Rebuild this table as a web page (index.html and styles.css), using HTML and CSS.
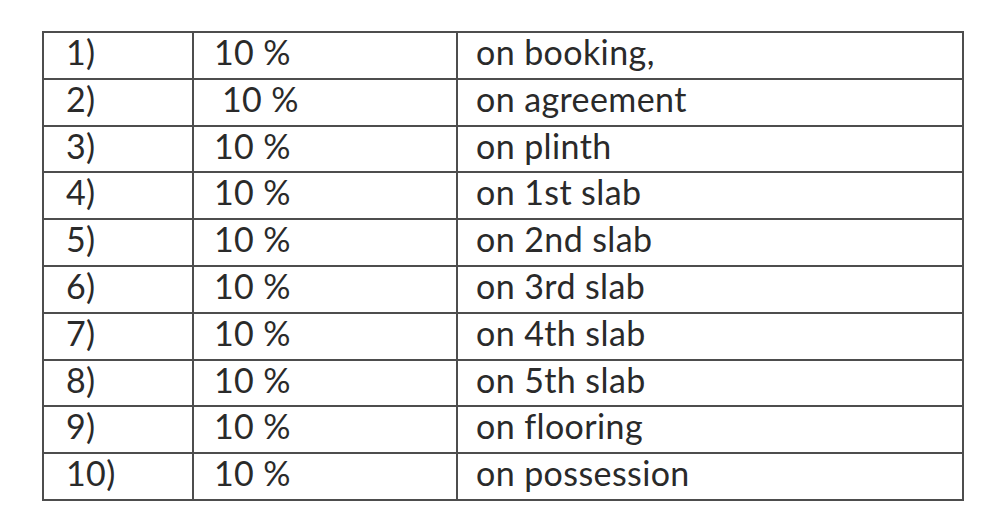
FILE: index.html
```html
<!DOCTYPE html>
<html>
<head>
<meta charset="utf-8">
<link rel="stylesheet" href="styles.css">
</head>
<body>
<table class="schedule">
  <colgroup>
    <col class="c-num">
    <col class="c-pct">
    <col class="c-desc">
  </colgroup>
  <tbody>
    <tr><td class="num">1)</td><td class="pct">10 %</td><td class="desc">on booking,</td></tr>
    <tr><td class="num">2)</td><td class="pct pct-shift">10 %</td><td class="desc">on agreement</td></tr>
    <tr><td class="num">3)</td><td class="pct">10 %</td><td class="desc">on plinth</td></tr>
    <tr><td class="num">4)</td><td class="pct">10 %</td><td class="desc">on 1st slab</td></tr>
    <tr><td class="num">5)</td><td class="pct">10 %</td><td class="desc">on 2nd slab</td></tr>
    <tr><td class="num">6)</td><td class="pct">10 %</td><td class="desc">on 3rd slab</td></tr>
    <tr><td class="num">7)</td><td class="pct">10 %</td><td class="desc">on 4th slab</td></tr>
    <tr><td class="num">8)</td><td class="pct">10 %</td><td class="desc">on 5th slab</td></tr>
    <tr><td class="num">9)</td><td class="pct">10 %</td><td class="desc">on flooring</td></tr>
    <tr><td class="num">10)</td><td class="pct">10 %</td><td class="desc">on possession</td></tr>
  </tbody>
</table>
</body>
</html>
```

FILE: styles.css
```css
html, body {
  margin: 0;
  padding: 0;
  background: #ffffff;
}

body {
  padding: 31px 0 0 42px;
  font-family: "Lato", "Liberation Sans", sans-serif;
  color: #2a2a2a;
}

.schedule {
  border-collapse: collapse;
  width: 920px;
  table-layout: fixed;
}

.c-num { width: 150px; }
.c-pct { width: 264px; }
.c-desc { width: 506px; }

.schedule td {
  border: 2px solid #4d4d4d;
  height: 46.8px;
  padding: 0;
  font-size: 34px;
  line-height: 38px;
  letter-spacing: 0.4px;
  vertical-align: top;
  white-space: nowrap;
  box-sizing: border-box;
}

.schedule td.num { padding-left: 22px; }
.schedule td.pct { padding-left: 20px; }
.schedule td.pct-shift { padding-left: 28px; }
.schedule td.desc { padding-left: 18px; }
```
